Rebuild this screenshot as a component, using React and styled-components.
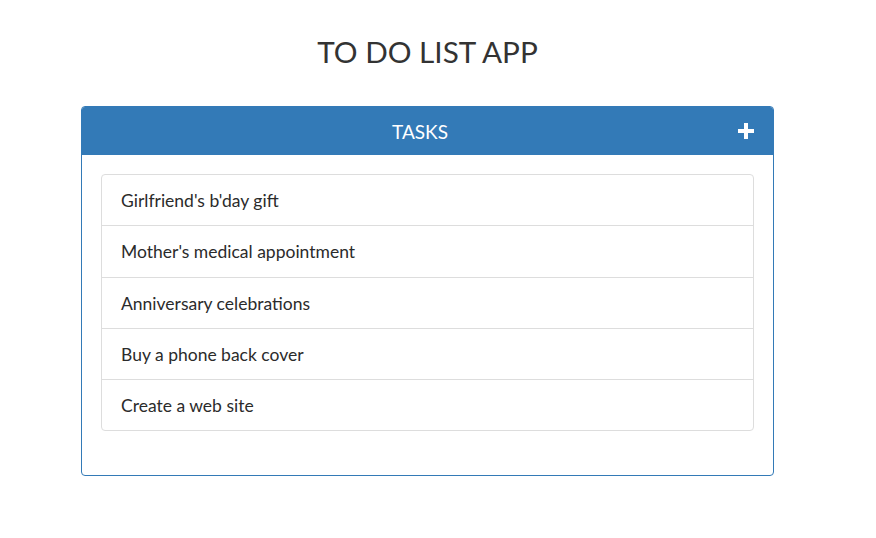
import styled, { createGlobalStyle } from "styled-components";

const GlobalStyle = createGlobalStyle`
  body {
    margin: 0;
    background: #ffffff;
    font-family: Lato, "Open Sans", sans-serif;
    color: #333333;
  }
`;

const Page = styled.div`
  width: 693px;
  margin-left: 81px;
  padding-top: 34px;
`;

const Title = styled.h1`
  margin: 0 0 36px;
  font-size: 29.7px;
  font-weight: 400;
  line-height: 36px;
  text-align: center;
  color: #333333;
`;

const Panel = styled.div`
  border: 1px solid #337ab7;
  border-radius: 4px;
  height: 370px;
  box-sizing: border-box;
`;

const PanelHeading = styled.div`
  position: relative;
  height: 48px;
  padding-right: 15px;
  background: #337ab7;
  border-radius: 3px 3px 0 0;
  display: flex;
  align-items: center;
  justify-content: center;
  color: #ffffff;
  font-size: 19px;
`;

const AddButton = styled.button`
  position: absolute;
  right: 18px;
  top: 15px;
  width: 18px;
  height: 18px;
  padding: 0;
  border: none;
  background: none;
  cursor: pointer;
  display: flex;
`;

const PanelBody = styled.div`
  padding: 19px 19px;
`;

const List = styled.ul`
  margin: 0;
  padding: 0;
  list-style: none;
`;

const Item = styled.li`
  padding: 13px 19px 12px;
  font-size: 17.5px;
  line-height: 25.3px;
  color: #2b2b2b;
  border: 1px solid #dddddd;
  margin-bottom: -1px;
  &:first-child {
    border-radius: 4px 4px 0 0;
  }
  &:last-child {
    border-radius: 0 0 4px 4px;
    margin-bottom: 0;
  }
`;

const tasks = [
  "Girlfriend's b'day gift",
  "Mother's medical appointment",
  "Anniversary celebrations",
  "Buy a phone back cover",
  "Create a web site",
];

const App = () => {
  return (
    <Page>
      <GlobalStyle />
      <Title>TO DO LIST APP</Title>
      <Panel>
        <PanelHeading>
          TASKS
          <AddButton>
            <svg width="18" height="18" viewBox="0 0 18 18">
              <path d="M7 1h4v6h6v4h-6v6H7v-6H1V7h6z" fill="#ffffff" />
            </svg>
          </AddButton>
        </PanelHeading>
        <PanelBody>
          <List>
            {tasks.map((task) => {
              return <Item key={task}>{task}</Item>;
            })}
          </List>
        </PanelBody>
      </Panel>
    </Page>
  );
};
export default App;
